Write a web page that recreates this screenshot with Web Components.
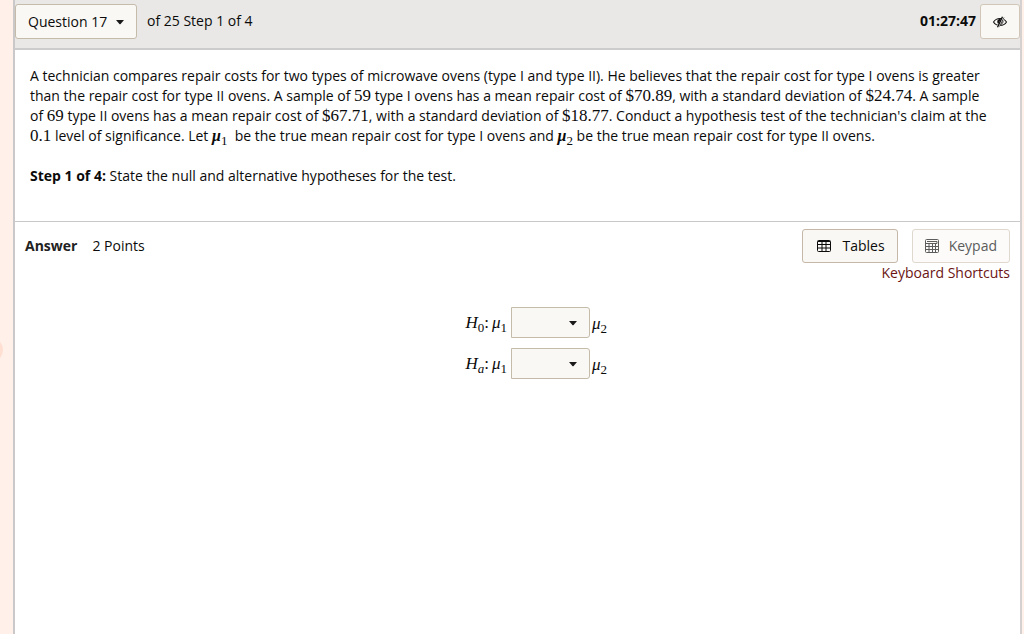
<!DOCTYPE html>
<html lang="en">
<head>
<meta charset="utf-8">
<title>Question 17</title>
<style>
html, body {
  height: 100%;
}
body {
  margin: 0;
  font: 14px/20px "Open Sans", "Noto Sans", sans-serif;
  color: #0b0b0b;
  background: #fff1ea;
}
</style>
</head>
<body>
<quiz-page>
  <question-bar slot="bar" current="17" total="25" step="1" steps="4" time="01:27:47"></question-bar>
  <question-text slot="question">
    A technician compares repair costs for two types of microwave ovens (type I and type II). He believes that the repair cost for type I ovens is greater than the repair cost for type II ovens. A sample of <math-text>59</math-text> type I ovens has a mean repair cost of <math-text>$70.89</math-text>, with a standard deviation of <math-text>$24.74</math-text>. A sample of <math-text>69</math-text> type II ovens has a mean repair cost of <math-text>$67.71</math-text>, with a standard deviation of <math-text>$18.77</math-text>. Conduct a hypothesis test of the technician's claim at the <math-text>0.1</math-text> level of significance. Let <math-text sub="1" bold><i>μ</i></math-text>&nbsp; be the true mean repair cost for type I ovens and <math-text sub="2" bold><i>μ</i></math-text>&nbsp;be the true mean repair cost for type II ovens.
    <span slot="step">Step 1 of 4:</span>
    <span slot="task">State the null and alternative hypotheses for the test.</span>
  </question-text>
  <answer-panel slot="answer" points="2">
    <tool-button slot="tools" icon="table">Tables</tool-button>
    <tool-button slot="tools" icon="keypad" disabled>Keypad</tool-button>
    <hypothesis-row name="0"></hypothesis-row>
    <hypothesis-row name="a"></hypothesis-row>
  </answer-panel>
</quiz-page>

<script>
function makeTemplate(html) {
  const template = document.createElement("template")
  template.innerHTML = html.trim()
  return template
}

const pageTemplate = makeTemplate(`
<style>
:host {
  display: flex;
  box-sizing: border-box;
  min-height: 100%;
  padding: 0 2px 0 13px;
  position: relative;
  overflow: hidden;
}
main {
  flex: 1;
  min-width: 0;
  background: #fff;
  border-left: 2px solid #cbc8c9;
  border-right: 2px solid #d5d1d1;
}
/* round side handle, mostly out of view */
.handle {
  position: absolute;
  left: -23px;
  top: 337px;
  width: 26px;
  height: 26px;
  border-radius: 50%;
  background: #ffdfd1;
}
</style>
<span class="handle"></span>
<main>
  <slot name="bar"></slot>
  <slot name="question"></slot>
  <slot name="answer"></slot>
</main>
`)

class QuizPage extends HTMLElement {
  constructor() {
    super()
    this.attachShadow({ mode: "open" })
    this.shadowRoot.appendChild(pageTemplate.content.cloneNode(true))
  }
}

const barTemplate = makeTemplate(`
<style>
:host {
  display: flex;
  align-items: flex-start;
  box-sizing: border-box;
  padding: 4px 0 9px;
  background: #e9e8e6;
  border-bottom: 2px solid #cdcccc;
}
drop-down {
  width: 122px;
  --height: 35px;
  --radius: 3px;
}
.progress {
  flex: 1;
  padding: 7px 0 0 10px;
}
.time {
  padding: 7px 4px 0 0;
  font-weight: 700;
}
button {
  display: flex;
  align-items: center;
  justify-content: center;
  width: 40px;
  height: 35px;
  padding: 0;
  border: 1px solid #d1c6b8;
  border-radius: 3px;
  background: #f9f8f5;
  color: #111;
}
svg {
  width: 16px;
  height: 12px;
}
</style>
<drop-down></drop-down>
<span class="progress"></span>
<span class="time"></span>
<button type="button" aria-label="Hide timer">
  <svg viewBox="0 0 16 12" fill="none" stroke="currentColor">
    <path d="M1.500 6C4.500 1.300 11.500 1.300 14.500 6C11.500 10.700 4.500 10.700 1.500 6Z" stroke-width="1.100"/>
    <path d="M9 2.800C5 2.300 4.200 6.600 6.700 8.500Z" fill="currentColor" stroke="none"/>
    <path d="M12 .8L5.800 11.200" stroke="#f9f8f5" stroke-width="2.600"/>
    <path d="M10.500 .8L5.500 11.200" stroke-width="1.400"/>
    <path d="M12 1.500L7.500 10.500" stroke-width=".7"/>
    <path d="M11 4.500C11.300 6.500 10.300 7.800 9 8.500" stroke-width=".8"/>
  </svg>
</button>
`)

class QuestionBar extends HTMLElement {
  constructor() {
    super()
    this.attachShadow({ mode: "open" })
    this.shadowRoot.appendChild(barTemplate.content.cloneNode(true))
  }
  connectedCallback() {
    const get = (name) => this.getAttribute(name)
    const list = this.shadowRoot.querySelector("drop-down")
    list.setAttribute("label", "Question")
    list.setAttribute("options", "Question " + get("current"))
    this.shadowRoot.querySelector(".progress").textContent =
      `of ${get("total")} Step ${get("step")} of ${get("steps")}`
    this.shadowRoot.querySelector(".time").textContent = get("time")
  }
}

const dropTemplate = makeTemplate(`
<style>
:host {
  display: inline-grid;
  align-items: center;
}
select, svg {
  grid-area: 1 / 1;
}
select {
  appearance: none;
  box-sizing: border-box;
  width: 100%;
  height: var(--height);
  margin: 0;
  padding: 0 12px;
  border: 1px solid #c4bba9;
  border-radius: var(--radius);
  background: #f9f8f5;
  color: inherit;
  font: inherit;
}
svg {
  justify-self: end;
  width: 8px;
  height: 5px;
  margin: 2px 13px 0 0;
  pointer-events: none;
}
</style>
<select></select>
<svg viewBox="0 0 8 5"><path fill="#1a1a1a" d="M0 0H8L4.600 4Q4 4.600 3.400 4Z"/></svg>
`)

class DropDown extends HTMLElement {
  static observedAttributes = ["label", "options"]
  constructor() {
    super()
    this.attachShadow({ mode: "open" })
    this.shadowRoot.appendChild(dropTemplate.content.cloneNode(true))
  }
  attributeChangedCallback(name, old, value) {
    const select = this.shadowRoot.querySelector("select")
    if (name === "label") {
      select.setAttribute("aria-label", value)
      return
    }
    select.replaceChildren(...value.split(",").map((text) => new Option(text)))
  }
}

// no whitespace round the slot, it would show up as a space in the line
const mathTemplate = makeTemplate(`
<style>
:host {
  display: inline;
  font: 17px/1 "Liberation Serif", serif;
  white-space: nowrap;
}
:host([bold]) {
  font-size: 16px;
  font-weight: 700;
}
sub {
  font-size: 13px;
  font-weight: 400;
  line-height: 0;
  vertical-align: -4px;
}
</style><slot></slot>
`)

class MathText extends HTMLElement {
  constructor() {
    super()
    this.attachShadow({ mode: "open" })
    this.shadowRoot.appendChild(mathTemplate.content.cloneNode(true))
  }
  connectedCallback() {
    const text = this.getAttribute("sub")
    if (!text) return
    const sub = document.createElement("sub")
    sub.textContent = text
    if (isNaN(text)) sub.style.fontStyle = "italic"
    this.shadowRoot.appendChild(sub)
  }
}

const questionTemplate = makeTemplate(`
<style>
:host {
  display: block;
  padding: 16px 26px 35px 15px;
  border-bottom: 1px solid #c9c9c9;
}
p {
  margin: 0 0 20px;
}
p:last-child {
  margin: 0;
}
</style>
<p><slot></slot></p>
<p><b><slot name="step"></slot></b> <slot name="task"></slot></p>
`)

class QuestionText extends HTMLElement {
  constructor() {
    super()
    this.attachShadow({ mode: "open" })
    this.shadowRoot.appendChild(questionTemplate.content.cloneNode(true))
  }
}

const answerTemplate = makeTemplate(`
<style>
:host {
  display: block;
  padding: 7px 10px 0;
}
header {
  display: flex;
  align-items: flex-start;
  justify-content: space-between;
}
.title {
  display: flex;
  gap: 15px;
  padding-top: 7px;
}
h2 {
  margin: 0;
  font: inherit;
  font-weight: 700;
  color: #222;
}
.side {
  display: flex;
  flex-direction: column;
  align-items: flex-end;
}
.tools {
  display: flex;
  gap: 14px;
}
a {
  color: #6b1414;
  text-decoration: none;
}
.rows {
  display: flex;
  flex-direction: column;
  align-items: center;
  gap: 10px;
  margin-top: 24px;
  padding-left: 38px;
}
</style>
<header>
  <div class="title"><h2>Answer</h2><span class="points"></span></div>
  <div class="side">
    <div class="tools"><slot name="tools"></slot></div>
    <a href="#shortcuts">Keyboard Shortcuts</a>
  </div>
</header>
<div class="rows"><slot></slot></div>
`)

class AnswerPanel extends HTMLElement {
  constructor() {
    super()
    this.attachShadow({ mode: "open" })
    this.shadowRoot.appendChild(answerTemplate.content.cloneNode(true))
  }
  connectedCallback() {
    this.shadowRoot.querySelector(".points").textContent = this.getAttribute("points") + " Points"
  }
}

const icons = {
  table: `<svg viewBox="0 0 14 12" fill="none" stroke="currentColor">
    <rect x=".5" y=".5" width="13" height="11" rx="1"/>
    <path d="M1 1.500H13M1 4.500H13M1 8H13M5 1V11M9 1V11"/>
  </svg>`,
  keypad: `<svg viewBox="0 0 14 14" fill="none" stroke="currentColor">
    <rect x=".5" y=".5" width="13" height="13" rx="1"/>
    <path d="M2 2.500H12V4.500H1M1 7.500H13M1 10.500H13M4 5V13M7.500 5V13M10.500 5V13"/>
  </svg>`
}

const toolTemplate = makeTemplate(`
<style>
:host {
  display: block;
}
button {
  display: flex;
  align-items: center;
  gap: 12px;
  height: 34px;
  padding: 0 12px 0 14px;
  border: 1px solid #c5b8a8;
  border-radius: 3px;
  background: #f9f8f5;
  color: #0b0b0b;
  font: inherit;
}
button:disabled {
  padding: 0 12px;
  gap: 10px;
  border-color: #dfd8cf;
  background: #fcfbfa;
  color: #5c5c5c;
}
svg {
  display: block;
  width: 14px;
}
</style>
<button type="button"><span class="icon"></span><slot></slot></button>
`)

class ToolButton extends HTMLElement {
  constructor() {
    super()
    this.attachShadow({ mode: "open" })
    this.shadowRoot.appendChild(toolTemplate.content.cloneNode(true))
  }
  connectedCallback() {
    this.shadowRoot.querySelector(".icon").innerHTML = icons[this.getAttribute("icon")]
    this.shadowRoot.querySelector("button").disabled = this.hasAttribute("disabled")
  }
}

const rowTemplate = makeTemplate(`
<style>
:host {
  display: grid;
  grid-template-columns: 46px 79px 18px;
  align-items: center;
  column-gap: 2px;
}
.left {
  display: flex;
  gap: 3px;
  justify-content: flex-end;
  align-items: baseline;
  padding-right: 2px;
  white-space: nowrap;
}
drop-down {
  --height: 31px;
  --radius: 0 3px 3px 0;
}
math-text {
  padding-top: 2px;
}
</style>
<span class="left"><span><math-text class="name"><i>H</i></math-text><math-text>:</math-text></span><math-text sub="1"><i>μ</i></math-text></span>
<drop-down options="" label="Relation"></drop-down>
<math-text sub="2"><i>μ</i></math-text>
`)

class HypothesisRow extends HTMLElement {
  constructor() {
    super()
    this.attachShadow({ mode: "open" })
    this.shadowRoot.appendChild(rowTemplate.content.cloneNode(true))
  }
  connectedCallback() {
    this.shadowRoot.querySelector(".name").setAttribute("sub", this.getAttribute("name"))
  }
}

// rows go before math-text so the subscript is set when it connects
customElements.define("quiz-page", QuizPage)
customElements.define("drop-down", DropDown)
customElements.define("question-bar", QuestionBar)
customElements.define("question-text", QuestionText)
customElements.define("answer-panel", AnswerPanel)
customElements.define("tool-button", ToolButton)
customElements.define("hypothesis-row", HypothesisRow)
customElements.define("math-text", MathText)
</script>
</body>
</html>
